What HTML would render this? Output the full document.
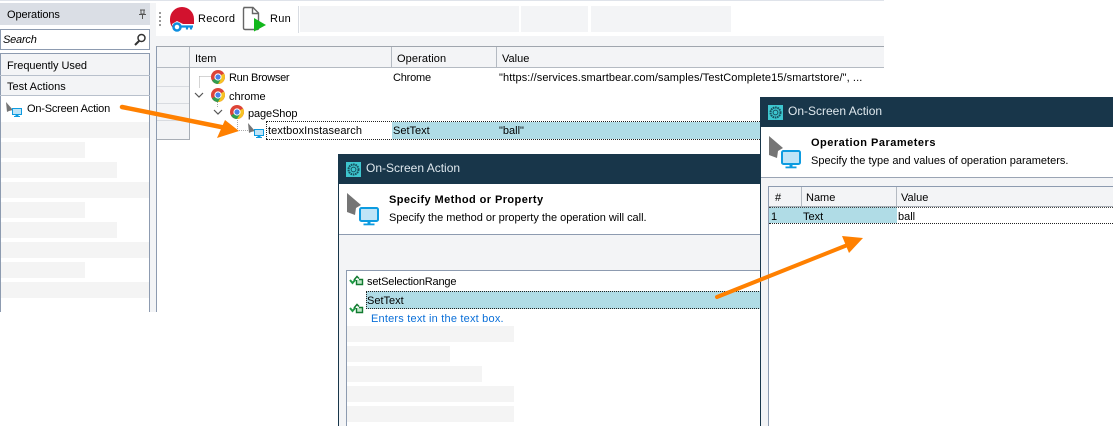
<!DOCTYPE html>
<html><head><meta charset="utf-8">
<style>
html,body{margin:0;padding:0;background:#fff}
#p{position:relative;width:1113px;height:426px;overflow:hidden;background:#fff;font-family:"Liberation Sans",sans-serif;font-size:11px;color:#000}
#p div{position:absolute}
.t{white-space:nowrap;line-height:14px;height:14px}
.g{background:#f4f4f4}
svg{position:absolute;overflow:visible}
</style></head><body><div id="p">
<svg width="0" height="0" style="position:absolute">
<defs>
<g id="chrome">
<circle cx="7" cy="7" r="7" fill="#dd4438"/>
<path d="M7 7L13 3.500A7 7 0 0 1 6 13.900L7 7Z" fill="#f6c324"/>
<path d="M7 7L1 10.500A7 7 0 0 0 7 14L10 9Z" fill="#2f9e4f"/>
<circle cx="7" cy="7" r="3.600" fill="#fff"/>
<circle cx="7" cy="7" r="2.600" fill="#4a80e8"/>
</g>
<g id="meth">
<path d="M1 5L3.500 8L6.500 4.500" stroke="#1f9a45" stroke-width="2" fill="none"/>
<path d="M5 5L8 1.500L10 3.500" stroke="#127a30" stroke-width="1.500" fill="none"/>
<path d="M7.500 5V9.500H13.500V4.500H10" stroke="#127a30" stroke-width="1.400" fill="#bfe8c8"/>
</g>
<g id="dlg">
<rect width="15" height="15" fill="#3ec6cf"/>
<circle cx="7.500" cy="7.500" r="5" fill="none" stroke="#17505f" stroke-width="2" stroke-dasharray="1.600 .7"/>
<circle cx="7.500" cy="7.500" r="2.400" fill="none" stroke="#17505f" stroke-width="1"/>
</g>
<g id="big">
<path d="M0 0L14 12L9 15L8 22L0 19Z" fill="#757575"/>
<rect x="13" y="15" width="18" height="13" rx="1.500" fill="#bfe4f7" stroke="#0d9be0" stroke-width="2"/>
<rect x="20.500" y="29" width="3" height="2" fill="#0d9be0"/>
<rect x="16.500" y="30.500" width="11" height="1.800" fill="#0d9be0"/>
</g>
<g id="small">
<path d="M0 1L7 9L3 10L1 11Z" fill="#757575"/>
<rect x="6.500" y="7.500" width="9" height="6" fill="#bfe4f7" stroke="#0d9be0" stroke-width="1"/>
<rect x="9.500" y="14" width="3" height="1" fill="#0d9be0"/>
<rect x="8" y="15" width="6" height="1" fill="#0d9be0"/>
</g>
</defs>
</svg>

<!-- top line -->
<div style="left:0;top:0;width:884px;height:1px;background:#dfe3ea"></div>

<!-- left panel -->
<div style="left:0;top:3px;width:150px;height:22px;background:#dadee5"></div>
<div class="t" style="left:7px;top:8px;letter-spacing:-.1px">Operations</div>
<svg style="left:137px;top:9px" width="10" height="10"><path d="M3 1H8M4 1V5H7V1M2 5.500H9M5.500 6V10" stroke="#555" fill="none"/></svg>
<div style="left:0;top:29px;border:1px solid #8d9bb0;box-sizing:content-box;width:148px;height:19px"></div>
<div class="t" style="left:3px;top:33px;font-style:italic;letter-spacing:-.2px">Search</div>
<svg style="left:133px;top:33px" width="14" height="13"><circle cx="8.500" cy="5" r="3.500" fill="none" stroke="#333" stroke-width="1.500"/><path d="M6 8L2 12" stroke="#333" stroke-width="2"/></svg>
<div style="left:0;top:53px;width:1px;height:259px;background:#8d9bb0"></div>
<div style="left:149px;top:53px;width:1px;height:259px;background:#8d9bb0"></div>
<div style="left:0;top:53px;width:150px;height:1px;background:#8d9bb0"></div>
<div style="left:1px;top:54px;width:148px;height:21px;background:#f3f4f6"></div>
<div style="left:0;top:75px;width:150px;height:1px;background:#b8c0cc"></div>
<div style="left:1px;top:76px;width:148px;height:19px;background:#f3f4f6"></div>
<div style="left:0;top:95px;width:150px;height:1px;background:#b8c0cc"></div>
<div class="t" style="left:7px;top:59px;letter-spacing:-.05px">Frequently Used</div>
<div class="t" style="left:7px;top:80px">Test Actions</div>
<svg style="left:6px;top:101px" width="17" height="17"><use href="#small"/></svg>
<div class="t" style="left:27px;top:102px;letter-spacing:-.2px">On-Screen Action</div>
<div class="g" style="left:1px;top:122px;width:148px;height:16px"></div>
<div class="g" style="left:1px;top:142px;width:84px;height:16px"></div>
<div class="g" style="left:1px;top:162px;width:116px;height:16px"></div>
<div class="g" style="left:1px;top:182px;width:148px;height:16px"></div>
<div class="g" style="left:1px;top:202px;width:84px;height:16px"></div>
<div class="g" style="left:1px;top:222px;width:116px;height:16px"></div>
<div class="g" style="left:1px;top:242px;width:148px;height:16px"></div>
<div class="g" style="left:1px;top:262px;width:84px;height:16px"></div>
<div class="g" style="left:1px;top:282px;width:148px;height:16px"></div>
<div style="left:150px;top:3px;width:6px;height:309px;background:#f3f4f6"></div>
<div style="left:156px;top:46px;width:1px;height:266px;background:#8d9bb0"></div>

<!-- toolbar -->
<div style="left:156px;top:36px;width:728px;height:10px;background:#f3f4f6"></div>
<div style="left:159px;top:12px;width:2px;height:14px;background:repeating-linear-gradient(#999 0 2px,transparent 2px 4px)"></div>
<svg style="left:169px;top:6px" width="28" height="27">
<path d="M1 13A12 12 0 0 1 25 13V18H14L8 15L3 18L4 22A12 12 0 0 1 1 13Z" fill="#d2122e"/>
<circle cx="8" cy="21" r="3.500" fill="none" stroke="#0d8fe0" stroke-width="2.500"/>
<path d="M11 20.500H24M18 20.500V23.500M22 20.500V23.500" stroke="#0d8fe0" stroke-width="2.200" fill="none"/>
</svg>
<div class="t" style="left:198px;top:12px;letter-spacing:.3px">Record</div>
<svg style="left:242px;top:6px" width="26" height="27">
<path d="M1.500 1.500H11L16.500 7V22.500Q16.500 23.500 15 23.500H3Q1.500 23.500 1.500 22V3Q1.500 1.500 3 1.500Z" fill="#fff" stroke="#666" stroke-width="1.400"/>
<path d="M10.500 2V7.500H16" fill="none" stroke="#666" stroke-width="1.400"/>
<path d="M12 12L24 19L12 25.500Z" fill="#12b81c"/>
</svg>
<div class="t" style="left:270px;top:12px;letter-spacing:.3px">Run</div>
<div style="left:298px;top:6px;width:1px;height:27px;background:#d8dce2"></div>
<div style="left:300px;top:6px;width:219px;height:26px;background:#f3f4f6"></div>
<div style="left:521px;top:6px;width:67px;height:26px;background:#f3f4f6"></div>
<div style="left:591px;top:6px;width:140px;height:26px;background:#f3f4f6"></div>

<!-- grid -->
<div style="left:157px;top:46px;width:727px;height:1px;background:#a0a6ae"></div>
<div style="left:157px;top:47px;width:727px;height:20px;background:#f3f4f6"></div>
<div style="left:157px;top:67px;width:727px;height:1px;background:#b4bac2"></div>
<div style="left:189px;top:47px;width:1px;height:20px;background:#b4bac2"></div>
<div style="left:391px;top:47px;width:1px;height:20px;background:#b4bac2"></div>
<div style="left:496px;top:47px;width:1px;height:20px;background:#b4bac2"></div>
<div class="t" style="left:195px;top:52px">Item</div>
<div class="t" style="left:397px;top:52px;letter-spacing:.1px">Operation</div>
<div class="t" style="left:502px;top:52px">Value</div>
<div style="left:157px;top:68px;width:32px;height:71px;background:#f3f4f6"></div>
<div style="left:189px;top:67px;width:1px;height:73px;background:#a8aeb6"></div>
<div style="left:157px;top:139px;width:33px;height:1px;background:#a8aeb6"></div>
<div style="left:157px;top:86px;width:32px;height:1px;background:#d8dbe0"></div>
<div style="left:157px;top:103px;width:32px;height:1px;background:#d8dbe0"></div>
<div style="left:157px;top:120px;width:32px;height:1px;background:#d8dbe0"></div>

<svg style="left:190px;top:68px" width="80" height="72" fill="none">
<path d="M9.500 8.500H21M9.500 8.500V20M27.500 32V40M47.500 52V62.500H58" stroke="#aaa" stroke-dasharray="1 1"/>
<path d="M5 25L9 29L13 25M24 42L28 46L32 42" stroke="#555" stroke-width="1.200"/>
</svg>
<svg style="left:211px;top:70px" width="14" height="14"><use href="#chrome"/></svg>
<svg style="left:211px;top:88px" width="14" height="14"><use href="#chrome"/></svg>
<svg style="left:230px;top:105px" width="14" height="14"><use href="#chrome"/></svg>
<svg style="left:248px;top:122px" width="17" height="17"><use href="#small"/></svg>
<div class="t" style="left:229px;top:71px;letter-spacing:-.3px">Run Browser</div>
<div class="t" style="left:393px;top:71px;letter-spacing:-.2px">Chrome</div>
<div class="t" style="left:499px;top:71px;letter-spacing:.09px">"https://services.smartbear.com/samples/TestComplete15/smartstore/", ...</div>
<div class="t" style="left:229px;top:90px">chrome</div>
<div class="t" style="left:248px;top:107px;letter-spacing:-.1px">pageShop</div>

<div style="left:392px;top:122px;width:368px;height:17px;background:#b0dce6"></div>
<div style="left:266px;top:121px;width:494px;height:0;border-top:1px dotted #222"></div>
<div style="left:266px;top:139px;width:494px;height:0;border-top:1px dotted #222"></div>
<div style="left:266px;top:121px;width:0;height:18px;border-left:1px dotted #222"></div>
<div class="t" style="left:268px;top:124px;letter-spacing:.1px">textboxInstasearch</div>
<div class="t" style="left:393px;top:124px">SetText</div>
<div class="t" style="left:499px;top:124px">"ball"</div>

<!-- dialog 1 -->
<div style="left:338px;top:154px;width:423px;height:272px;background:#fff"></div>
<div style="left:338px;top:154px;width:423px;height:30px;background:#18364a"></div>
<div style="left:338px;top:184px;width:1px;height:242px;background:#18364a"></div>
<svg style="left:346px;top:162px" width="15" height="15"><use href="#dlg"/></svg>
<div class="t" style="left:366px;top:161px;color:#dfe8ee;font-size:12px">On-Screen Action</div>
<svg style="left:347px;top:193px" width="33" height="33"><use href="#big"/></svg>
<div class="t" style="left:389px;top:193px;font-weight:bold;letter-spacing:.42px">Specify Method or Property</div>
<div class="t" style="left:389px;top:211px;letter-spacing:-.02px">Specify the method or property the operation will call.</div>
<div style="left:339px;top:234px;width:422px;height:1px;background:#8d9bb0"></div>
<div style="left:339px;top:235px;width:422px;height:191px;background:#f3f4f6"></div>
<div style="left:346px;top:270px;width:415px;height:156px;background:#fff"></div>
<div style="left:346px;top:270px;width:415px;height:1px;background:#8d9bb0"></div>
<div style="left:346px;top:270px;width:1px;height:156px;background:#8d9bb0"></div>
<svg style="left:349px;top:275px" width="15" height="11"><use href="#meth"/></svg>
<div class="t" style="left:367px;top:275px;letter-spacing:-.18px">setSelectionRange</div>
<div style="left:366px;top:291px;width:395px;height:18px;background:#b0dce6;border-top:1px dotted #222;border-bottom:1px dotted #222;box-sizing:border-box"></div>
<div style="left:366px;top:291px;width:0;height:18px;border-left:1px dotted #222"></div>
<svg style="left:349px;top:303px" width="15" height="11"><use href="#meth"/></svg>
<div class="t" style="left:367px;top:294px">SetText</div>
<div class="t" style="left:371px;top:312px;color:#0a6fd8;letter-spacing:.2px">Enters text in the text box.</div>
<div class="g" style="left:347px;top:326px;width:167px;height:16px"></div>
<div class="g" style="left:347px;top:346px;width:103px;height:16px"></div>
<div class="g" style="left:347px;top:366px;width:135px;height:16px"></div>
<div class="g" style="left:347px;top:386px;width:167px;height:16px"></div>
<div class="g" style="left:347px;top:406px;width:167px;height:16px"></div>

<!-- dialog 2 -->
<div style="left:760px;top:97px;width:353px;height:329px;background:#fff"></div>
<div style="left:760px;top:97px;width:353px;height:30px;background:#18364a"></div>
<div style="left:760px;top:127px;width:1px;height:299px;background:#18364a"></div>
<svg style="left:768px;top:105px" width="15" height="15"><use href="#dlg"/></svg>
<div class="t" style="left:788px;top:104px;color:#dfe8ee;font-size:12px">On-Screen Action</div>
<svg style="left:769px;top:136px" width="33" height="33"><use href="#big"/></svg>
<div class="t" style="left:811px;top:136px;font-weight:bold;letter-spacing:.5px">Operation Parameters</div>
<div class="t" style="left:811px;top:154px">Specify the type and values of operation parameters.</div>
<div style="left:761px;top:177px;width:352px;height:1px;background:#9aa4b4"></div>
<div style="left:761px;top:178px;width:352px;height:248px;background:#f3f4f6"></div>
<div style="left:768px;top:186px;width:345px;height:240px;background:#fff"></div>
<div style="left:768px;top:186px;width:345px;height:1px;background:#8d9bb0"></div>
<div style="left:768px;top:186px;width:1px;height:240px;background:#8d9bb0"></div>
<div style="left:769px;top:187px;width:344px;height:19px;background:#f3f4f6"></div>
<div style="left:769px;top:206px;width:344px;height:1px;background:#a8aeb6"></div>
<div style="left:801px;top:187px;width:1px;height:19px;background:#b4bac2"></div>
<div style="left:896px;top:187px;width:1px;height:19px;background:#b4bac2"></div>
<div class="t" style="left:775px;top:191px">#</div>
<div class="t" style="left:806px;top:191px">Name</div>
<div class="t" style="left:901px;top:191px">Value</div>
<div style="left:769px;top:207px;width:128px;height:16px;background:#b0dce6"></div>
<div style="left:769px;top:223px;width:344px;height:0;border-top:1px dotted #222"></div>
<div style="left:769px;top:207px;width:344px;height:0;border-top:1px dotted #444"></div>
<div class="t" style="left:771px;top:210px">1</div>
<div class="t" style="left:803px;top:210px">Text</div>
<div class="t" style="left:898px;top:210px">ball</div>

<!-- arrows -->
<svg style="left:0;top:0" width="1113" height="426">
<path d="M122 107L226 128" stroke="#ff8000" stroke-width="4.500" stroke-linecap="round" fill="none"/>
<path d="M239 131L225 120L217 138Z" fill="#ff8000"/>
<path d="M717 297L850 244" stroke="#ff8000" stroke-width="4" stroke-linecap="round" fill="none"/>
<path d="M863 238L842 236L849 253Z" fill="#ff8000"/>
</svg>
</div></body></html>
